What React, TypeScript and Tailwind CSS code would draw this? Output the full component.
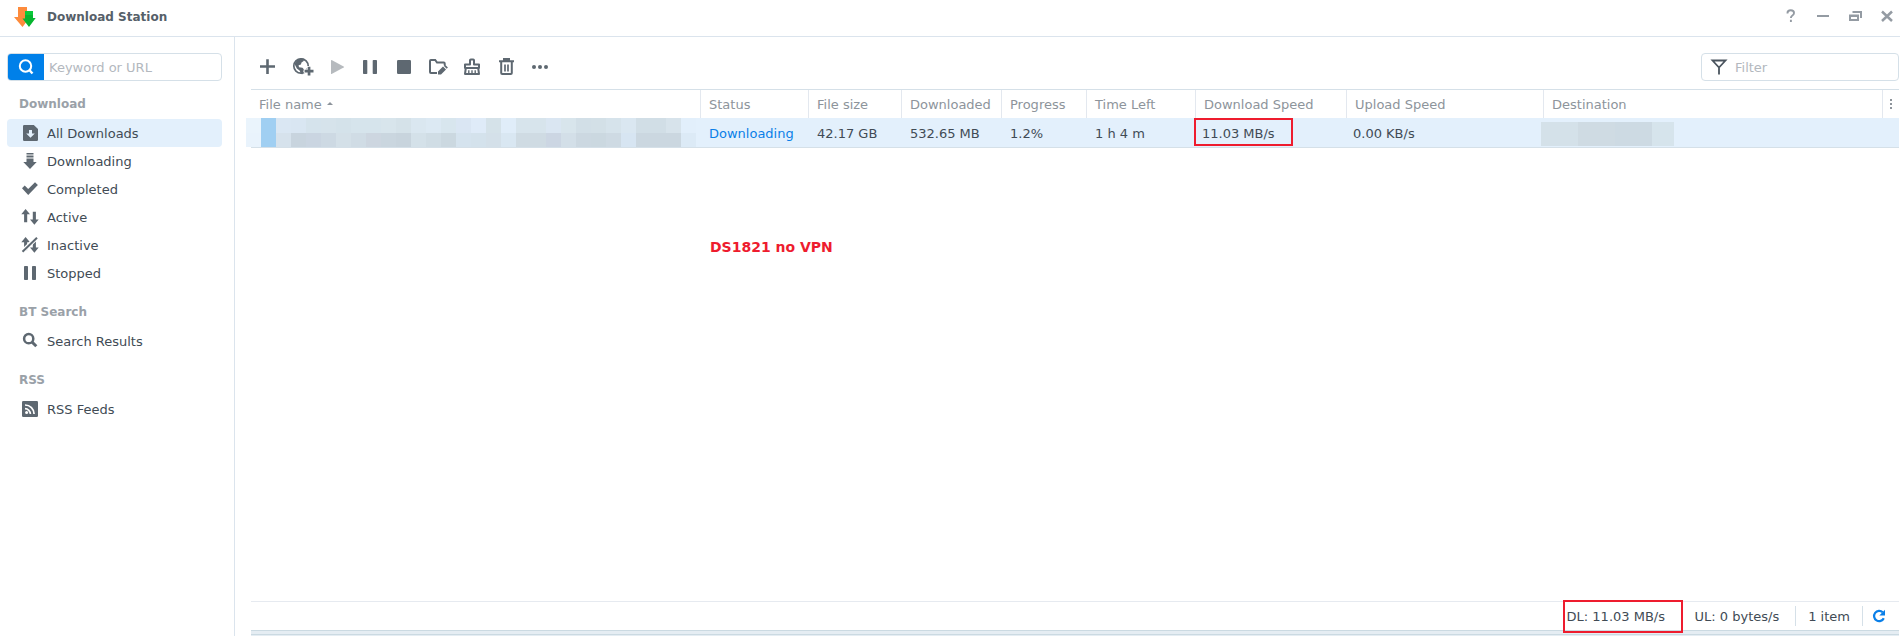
import React, { useState } from 'react';

const ICON = 'h-6 w-6 shrink-0';

// Blurred name and destination blocks
const NAME_TOP = [
  '#eaf4fc', '#a0cff2', '#dae7f3', '#d9e6f2', '#d5e3ec', '#d6e3eb', '#d4e2ea', '#d6e4ec', '#d6e4ec', '#d8e5ec',
  '#d5e2e9', '#dae7f0', '#dce9f3', '#d8e6ee', '#dae6f3', '#dfebf8', '#d5e2e9', '#e0edf9', '#d7e4ec', '#d7e4ec',
  '#dae6f2', '#d8e5ec', '#d2dfe7', '#d3e0e7', '#d6e3eb', '#dae7f1', '#d1dee6', '#d1dee6', '#d7e3eb', '#e2effb',
];
const NAME_BOTTOM = [
  '#e9f3fc', '#a0cff2', '#d6e2ec', '#c8d4de', '#cad5e1', '#cdd9e3', '#d4e0e8', '#d0dce5', '#cdd6e0', '#cad6df',
  '#c8d4dd', '#d4e1e9', '#d0dde5', '#cbd8e0', '#d5e3ee', '#d4e2ec', '#d4e0e9', '#d9e7f2', '#cfdbe3', '#cfdbe3',
  '#ccd6e3', '#d3dfe8', '#ccd8e1', '#cbd8e0', '#cedae3', '#d7e5f2', '#cbd7e0', '#cbd7e0', '#cbd7e0', '#dceaf6',
];

const Svg: React.FC<{ children: React.ReactNode; className?: string }> = ({ children, className = ICON }) => (
  <svg viewBox="0 0 24 24" fill="currentColor" className={className} aria-hidden="true">
    {children}
  </svg>
);

const toolbar = [
  { label: 'Add', icon: <path d="M10.2 4.3h2.6v5.9h6.2v2.6h-6.2V19h-2.6v-6.200H4v-2.600h6.200z" /> },
  {
    label: 'Add URL',
    icon: (
      <>
        <circle cx="11" cy="11" r="7.200" fill="none" stroke="currentColor" strokeWidth="1.700" />
        <path d="M4.500 9 7 5l4-2 3 .8-.3 2.200-2.200 1.500-.6 2-2.300.8.4 2 3.500.4 1.500 1.800-1.500 4.700-1.500-.2-1.200-3.200-2.900-2.200z" />
        <path d="M17 11h4v3.200h3.200v4H21v3.200h-4v-3.200h-3.200v-4H17z" fill="#fff" />
        <path d="M17.700 11.700h2.700v3.100h3.100v2.700h-3.100v3.100h-2.700v-3.100h-3.100v-2.700h3.100z" />
      </>
    ),
  },
  { label: 'Resume', disabled: true, icon: <path d="M7.6 5.1 19.6 11.4q1 .6 0 1.2L7.6 18.9Q7 19 7 18.4V5.6q0-.6.6-.5z" /> },
  {
    label: 'Pause',
    icon: (
      <>
        <rect x="5" y="5" width="4.3" height="14" rx=".8" />
        <rect x="14.7" y="5" width="4.3" height="14" rx=".8" />
      </>
    ),
  },
  { label: 'Stop', icon: <rect x="5" y="5" width="14" height="14" rx="1.2" /> },
  {
    label: 'Edit',
    icon: (
      <>
        <path d="M11 18H4.9q-.9 0-.9-.9V5.9q0-.9.9-.9h4.3l1.800 2.500h6.800q.9 0 .9.9V10" fill="none" stroke="currentColor" strokeWidth="2" />
        <path d="m12 16.500 5-5 3 3-5 5h-3zM17.700 10.800l1.200-1.200 3 3-1.200 1.200z" />
      </>
    ),
  },
  {
    label: 'Clear completed',
    icon: (
      <>
        <path d="M10 9.500V5.300q0-.8.8-.8h2.400q.8 0 .8.8v4.200h5V13H5V9.500zM5.800 13 5 19h14l-.8-6" fill="none" stroke="currentColor" strokeWidth="2" strokeLinejoin="round" />
        <path d="M8.800 15.300V19M12 15.300V19M15.200 15.300V19" stroke="currentColor" strokeWidth="1.400" />
      </>
    ),
  },
  {
    label: 'Delete',
    icon: (
      <>
        <path d="M5 5.200h4V3h7v2.200h4v2H5z" />
        <path d="M7.200 7v11q0 1 1 1h8.600q1 0 1-1V7" fill="none" stroke="currentColor" strokeWidth="2" />
        <path d="M11 9.500v7M14 9.500v7" stroke="currentColor" strokeWidth="1.700" />
      </>
    ),
  },
  {
    label: 'More',
    icon: (
      <>
        <circle cx="6" cy="12" r="2" />
        <circle cx="12" cy="12" r="2" />
        <circle cx="18" cy="12" r="2" />
      </>
    ),
  },
];

const navGroups = [
  {
    title: 'Download',
    items: [
      {
        label: 'All Downloads',
        icon: <path fillRule="evenodd" d="M6.2 4h9.600L20 8v10.800q0 1.200-1.200 1.200H6.200Q5 20 5 18.800V5.200Q5 4 6.200 4zM11 9v3.500H8.200l4.300 4.300 4.300-4.300H14V9z" />,
      },
      { label: 'Downloading', icon: <path d="M8.500 4h7v1.500h-7zM8.500 6.500h7v2h-7zM8.500 9.500h7V13h3.200L12 20l-6.700-7h3.200z" /> },
      { label: 'Completed', icon: <path d="m4 11.300 2.700-2.700 3.500 3.500L17 5.300 19.900 8l-9.700 10z" /> },
      { label: 'Active', icon: <path d="M7.600 4 12 9.300H9.200v8H6.100v-8H3.300zM16.400 19.700 12 14.400h2.800V6.700h3.100v7.700h2.800z" /> },
      {
        label: 'Inactive',
        icon: (
          <>
            <path d="M7.600 4 12 9.300H9.200v8H6.100v-8H3.300zM16.400 19.700 12 14.400h2.800V6.700h3.100v7.700h2.800z" />
            <path d="M4 19 19.500 4" stroke="#fff" strokeWidth="4.500" />
            <path d="M4.500 18.700 19 4.700" stroke="currentColor" strokeWidth="2" />
          </>
        ),
      },
      {
        label: 'Stopped',
        icon: (
          <>
            <rect x="6" y="5" width="4" height="14" rx=".8" />
            <rect x="14" y="5" width="4" height="14" rx=".8" />
          </>
        ),
      },
    ],
  },
  {
    title: 'BT Search',
    items: [
      {
        label: 'Search Results',
        icon: (
          <g fill="none" stroke="currentColor">
            <circle cx="10.700" cy="9.700" r="4.600" strokeWidth="2.500" />
            <path d="m14 13 4.300 4.300" strokeWidth="3" />
          </g>
        ),
      },
    ],
  },
  {
    title: 'RSS',
    items: [
      {
        label: 'RSS Feeds',
        icon: (
          <>
            <rect x="4" y="4" width="16" height="16" rx="1.200" />
            <g fill="none" stroke="#fff" strokeWidth="1.700">
              <path d="M7 11.700a5.400 5.400 0 0 1 5.400 5.400M7 8a9.100 9.100 0 0 1 9.100 9.100" />
            </g>
            <circle cx="8.600" cy="15.500" r="1.500" fill="#fff" />
          </>
        ),
      },
    ],
  },
];

const windowButtons = [
  { label: 'Help', icon: <path d="M8.500 9.500V9q0-2.700 3.200-2.700 3.300 0 3.300 2.700 0 1.500-1.600 2.500-1.500 1-1.500 2.500M11.900 15.800v2.100" fill="none" stroke="currentColor" strokeWidth="1.900" /> },
  { label: 'Minimize', icon: <rect x="6" y="11" width="12" height="2" /> },
  {
    label: 'Restore',
    icon: <path fillRule="evenodd" d="M9.500 7H19v7h-2V9H9.500zM6 10.500h10V17H6zM8 13v2h6v-2z" />,
  },
  { label: 'Close', icon: <path d="m7 7.500 10 9.500M17 7.500 7 17" stroke="currentColor" strokeWidth="2.500" /> },
];

const columns = [
  { label: 'File name', width: 'w-[450px]', sorted: true },
  { label: 'Status', width: 'w-[108px]' },
  { label: 'File size', width: 'w-[93px]' },
  { label: 'Downloaded', width: 'w-[100px]' },
  { label: 'Progress', width: 'w-[85px]' },
  { label: 'Time Left', width: 'w-[109px]' },
  { label: 'Download Speed', width: 'w-[151px]' },
  { label: 'Upload Speed', width: 'w-[197px]' },
  { label: 'Destination', width: '' },
];

const TitleBar: React.FC = () => (
  <header className="flex h-[37px] shrink-0 items-center border-b border-[#dbe4ed] pr-px pb-1">
    <svg viewBox="0 0 24 24" className="ml-3 h-6 w-6" aria-hidden="true">
      <path d="M6 3h9v9.500h3.500L10.500 23 2 13h4z" fill="#fd8b3c" />
      <path d="M13 7h8v7h2.700L17 23l-6.500-8.500H13z" fill="#06b52f" />
      <path d="M13 7h8v4h-8z" fill="#0ac93a" />
    </svg>
    <h1 className="ml-[11px] flex-1 pt-0.5 text-[12px] font-bold text-[#566069]">Download Station</h1>
    <div className="flex gap-2 text-[#949ba3]">
      {windowButtons.map((b) => (
        <button key={b.label} type="button" aria-label={b.label}>
          <Svg>{b.icon}</Svg>
        </button>
      ))}
    </div>
  </header>
);

const Sidebar: React.FC = () => {
  const [active, setActive] = useState('All Downloads');

  return (
    <aside className="w-[235px] shrink-0 border-r border-[#dbe4ed] pt-4 pr-3 pl-[7px]">
      <div className="flex h-7 overflow-hidden rounded border border-[#d5e0e8]">
        <button type="button" aria-label="Search" className="-my-px -ml-px flex w-[37px] items-center justify-center bg-[#0080e9] text-white">
          <Svg>
            <g fill="none" stroke="currentColor" strokeWidth="2">
              <circle cx="11.500" cy="11" r="5.700" />
              <path d="m15.300 15 3.200 3.500" strokeWidth="2.400" />
            </g>
          </Svg>
        </button>
        <input
          type="text"
          aria-label="Keyword or URL"
          placeholder="Keyword or URL"
          className="min-w-0 flex-1 px-[5px] pt-0.5 text-[13px] placeholder-[#b3b8be] focus:outline-none"
        />
      </div>

      <nav className="-mt-0.5">
        {navGroups.map((group) => (
          <section key={group.title}>
            <h2 className="px-3 pt-2.5 text-[12px] leading-[30px] font-bold text-[#9aa1a8]">{group.title}</h2>
            {group.items.map((item) => (
              <button
                key={item.label}
                type="button"
                onClick={() => setActive(item.label)}
                className={`flex h-7 w-full items-center gap-[5px] rounded pl-[11px] text-left text-[13px] text-[#414b55] ${active === item.label ? 'bg-[#e3f0fc]' : ''}`}
              >
                <Svg className="h-6 w-6 shrink-0 text-[#5e6871]">{item.icon}</Svg>
                <span className="pt-0.5">{item.label}</span>
              </button>
            ))}
          </section>
        ))}
      </nav>
    </aside>
  );
};

const Toolbar: React.FC = () => (
  <div className="flex items-center justify-between pt-4 pb-2">
    <div className="flex text-[#5e6871]">
      {toolbar.map((t) => (
        <button
          key={t.label}
          type="button"
          aria-label={t.label}
          disabled={t.disabled}
          className="flex h-7 w-[34px] items-center justify-center disabled:opacity-45"
        >
          <Svg>{t.icon}</Svg>
        </button>
      ))}
    </div>
    <label className="flex h-7 w-[198px] items-center rounded border border-[#d5e0e8] pl-[5px]">
      <svg viewBox="0 0 24 24" className="h-6 w-6 shrink-0 text-[#4a545e]" fill="none" stroke="currentColor" aria-hidden="true">
        <path d="M5.500 5.500h13L12 12.500zM12 12v7.500" strokeWidth="1.800" />
      </svg>
      <input type="text" aria-label="Filter" placeholder="Filter" className="min-w-0 flex-1 pt-0.5 pl-1 text-[13px] placeholder-[#b3b8be] focus:outline-none" />
    </label>
  </div>
);

const TaskTable: React.FC = () => (
  <table className="w-full table-fixed border-separate border-spacing-0 border-t border-[#d5e0e8] text-left text-[13px] whitespace-nowrap">
    <thead>
      <tr className="h-7 text-[#8d949b]">
        {columns.map((c) => (
          <th key={c.label} className={`border-r border-[#e3e8ef] p-0 pt-0.5 pl-2 font-normal ${c.width}`}>
            {c.label}
            {c.sorted && (
              <svg viewBox="0 0 6 3" className="mb-1 ml-[5px] inline h-[3px] w-1.5" fill="currentColor" aria-hidden="true">
                <path d="M3 0 6 3H0z" />
              </svg>
            )}
          </th>
        ))}
        <th className="w-4 p-0">
          <button type="button" aria-label="Columns" className="flex w-full justify-center">
            <svg viewBox="0 0 2 10" className="h-2.5 w-0.5" fill="currentColor" aria-hidden="true">
              <path d="M0 0h2v2H0zM0 4h2v2H0zM0 8h2v2H0z" />
            </svg>
          </button>
        </th>
      </tr>
    </thead>
    <tbody>
      <tr className="h-[30px] bg-[#e3f0fc] text-[#414b55] *:border-b *:border-[#d5e0e8] *:pt-0.5">
        <td className="relative p-0">
          <svg viewBox="0 0 450 29" className="absolute top-0 -left-[5px] h-[29px] w-[450px]" shapeRendering="crispEdges" role="img" aria-label="Hidden file name">
            {NAME_TOP.map((fill, i) => <rect key={i} x={i * 15} y="0" width="15" height="15" fill={fill} />)}
            {NAME_BOTTOM.map((fill, i) => <rect key={i} x={i * 15} y="15" width="15" height="14" fill={fill} />)}
          </svg>
        </td>
        <td className="p-0 pl-2 text-[#0a7fe8]">Downloading</td>
        <td className="p-0 pl-2">42.17 GB</td>
        <td className="p-0 pl-2">532.65 MB</td>
        <td className="p-0 pl-2">1.2%</td>
        <td className="p-0 pl-2">1 h 4 m</td>
        <td className="relative p-0 pl-1.5">
          11.03 MB/s
          <span className="absolute top-0 -left-0.5 h-7 w-[99px] border-2 border-[#ee1c2e]" />
        </td>
        <td className="p-0 pl-1.5">0.00 KB/s</td>
        <td className="relative p-0">
          <svg viewBox="0 0 133 24" className="absolute top-1 -left-[3px] h-6 w-[133px]" shapeRendering="crispEdges" role="img" aria-label="Hidden destination">
            <rect width="37" height="24" fill="#d4e1e9" />
            <rect x="37" width="37" height="24" fill="#cfdbe3" />
            <rect x="74" width="37" height="24" fill="#cddae3" />
            <rect x="111" width="22" height="24" fill="#d6e4ec" />
          </svg>
        </td>
        <td className="p-0" />
      </tr>
    </tbody>
  </table>
);

const StatusBar: React.FC = () => (
  <footer className="mt-auto">
    <div className="flex h-[29px] items-center justify-end border-t border-[#e6eaf0] pr-3 text-[13px] text-[#414b55]">
      <div className="relative mr-3 flex h-7 w-[120px] items-center pl-1">
        <span className="pt-0.5">DL: 11.03 MB/s</span>
        <span className="absolute -top-0.5 left-0 h-[33px] w-full border-2 border-[#ee1c2e]" />
      </div>
      <span className="pt-0.5 pr-4">UL: 0 bytes/s</span>
      <span className="flex h-5 items-center border-x border-[#d5e0e8] px-3 pt-0.5">1 item</span>
      <button type="button" aria-label="Refresh" className="ml-2">
        <svg viewBox="0 0 16 16" className="h-4 w-4" aria-hidden="true">
          <path d="M12.800 10.200A5.100 5.100 0 1 1 11.700 4.300" fill="none" stroke="#0a7fe8" strokeWidth="2.200" />
          <path d="M14 1.800v5.700H8.300z" fill="#0a7fe8" />
        </svg>
      </button>
    </div>
    <div className="h-[5px] border-y border-[#cbdae2] bg-[#e5edf3]" />
    <div className="h-px bg-[#e5edf3]" />
  </footer>
);

export default function App() {
  return (
    <div className="flex min-h-screen flex-col bg-white font-['Verdana','DejaVu_Sans',sans-serif]">
      <TitleBar />
      <div className="flex flex-1">
        <Sidebar />
        <main className="flex min-w-0 flex-1 flex-col pr-px pl-4">
          <Toolbar />
          <div className="relative">
            <TaskTable />
            <p className="absolute top-[148px] left-[459px] text-[14px] font-bold text-[#ee1c2e]">DS1821 no VPN</p>
          </div>
          <StatusBar />
        </main>
      </div>
    </div>
  );
}
